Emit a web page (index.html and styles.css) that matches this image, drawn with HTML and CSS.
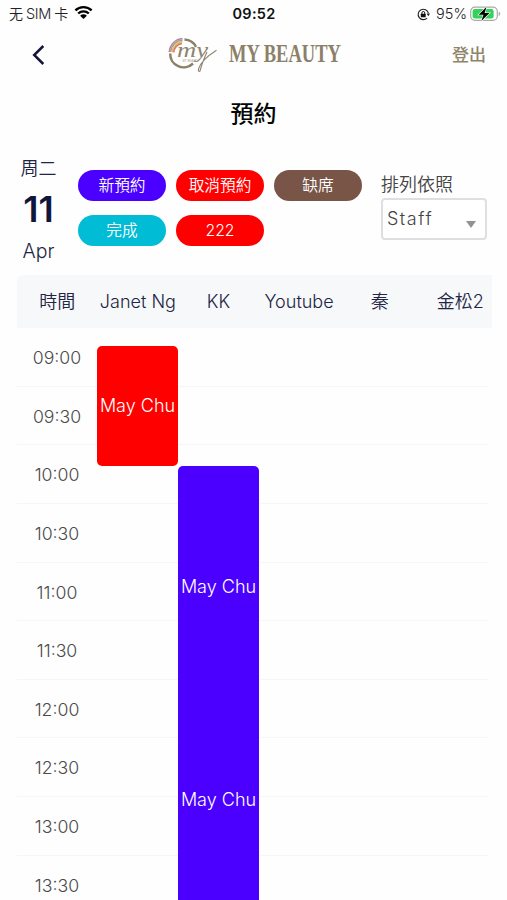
FILE: index.html
```html
<!doctype html>
<html lang="zh-Hant">

<head>
	<title>預約</title>
	<meta charset="utf-8">
	<meta name="viewport" content="width=device-width, initial-scale=1.0">
	<link rel="stylesheet" href="styles.css">
</head>

<body>
	<div class="status">
		<div class="carrier">
			<span>无<span class="sim">SIM</span>卡</span>
			<svg class="wifi" width="19" height="15" viewBox="0 0 19 15">
				<path d="M1.4 5.4a11.6 11.6 0 0 1 16.2 0M4.2 8.5a7.6 7.6 0 0 1 10.6 0" fill="none" stroke="#000" stroke-width="2.4"/>
				<path d="M6.1 10.7a4.9 4.9 0 0 1 6.8 0L9.5 14z"/>
			</svg>
		</div>
		<div class="clock">09:52</div>
		<div class="power">
			<svg class="lock" width="13" height="13" viewBox="0 0 13 13">
				<path d="M11.4 5.1A5.2 5.2 0 1 0 10.2 10" fill="none" stroke="#222" stroke-width="1.1"/>
				<path d="M9.6 5.6h3.4l-1.6 2.7z" fill="#222"/>
				<rect x="3.8" y="5.7" width="4.9" height="3.6" rx=".6" fill="#111"/>
				<path d="M4.9 6V4.9a1.4 1.4 0 0 1 2.8 0V6" fill="none" stroke="#111"/>
			</svg>
			<span class="percent">95%</span>
			<svg class="battery" width="31" height="16" viewBox="0 0 31 16">
				<rect x=".7" y="1.2" width="26.6" height="13.2" rx="4.2" fill="#fff" stroke="#a9a9a9" stroke-width="1.2"/>
				<rect x="2.6" y="3.1" width="21" height="9.4" rx="2.3" fill="#35d158"/>
				<path d="M28.7 5.8v4.1q1.6-.5 1.6-2t-1.6-2.1z" fill="#aaa"/>
				<path d="M16.6.8 8.7 8.7h4.8l-2.2 6.3 8.2-8h-4.9z" stroke="#fff" stroke-width="1.2" paint-order="stroke"/>
			</svg>
		</div>
	</div>

	<header class="topbar">
		<a class="back" href="#">
			<svg width="13" height="22" viewBox="0 0 13 22">
				<path d="M11.3 2 2.2 11l9.1 9" fill="none" stroke="#17133f" stroke-width="2.5"/>
			</svg>
		</a>
		<div class="logo">
			<svg width="52" height="40" viewBox="0 0 52 40">
				<g fill="none">
					<path d="M18.5 4.6A13.8 13.8 0 0 1 30 11.8" stroke="#8b8068" stroke-width="2.5"/>
					<path d="M4.2 18.5A13.4 13.4 0 0 0 27 28.5" stroke="#8b8068" stroke-width="2.5"/>
					<path d="M3.3 17A14.2 14.2 0 0 1 16.5 3.6" stroke="#b781bb" stroke-width="1.5"/>
					<path d="M4.7 17A12.8 12.8 0 0 1 16.5 5" stroke="#9fa678" stroke-width="1.5"/>
					<path d="M6.1 17.2A11.4 11.4 0 0 1 16.5 6.5" stroke="#d8c06f" stroke-width="1.5"/>
					<path d="M7.7 17.4A9.6 9.6 0 0 1 16 8.3" stroke="#e77960" stroke-width="1.8"/>
					<path d="M41 17Q36 28 34 36q-2 1.5-1.5-2Q35 25 50.5 15.2" stroke="#8f846e" stroke-width="1.1"/>
				</g>
				<text class="logo-script" x="11" y="21.5" textLength="31" lengthAdjust="spacingAndGlyphs">my</text>
				<text class="logo-small" x="16.5" y="26.5" textLength="16">MY BEAUTY</text>
			</svg>
			<span class="logo-name">MY BEAUTY</span>
		</div>
		<a class="logout" href="#">登出</a>
	</header>

	<h1>預約</h1>

	<section class="filters">
		<div class="date">
			<span>周二</span>
			<span class="day">11</span>
			<span class="month">Apr</span>
		</div>
		<div class="legend">
			<span class="pill new">新預約</span>
			<span class="pill cancelled">取消預約</span>
			<span class="pill absent">缺席</span>
			<span class="pill done">完成</span>
			<span class="pill cancelled">222</span>
		</div>
		<div class="sort">
			<span>排列依照</span>
			<div class="select">
				<span>Staff</span>
				<i class="caret"></i>
			</div>
		</div>
	</section>

	<main class="schedule">
		<div class="staff">
			<span>時間</span>
			<span>Janet Ng</span>
			<span>KK</span>
			<span>Youtube</span>
			<span>秦</span>
			<span>金松2</span>
		</div>
		<div class="board">
			<div class="times">
				<div class="slot"><span>09:00</span></div>
				<div class="slot"><span>09:30</span></div>
				<div class="slot"><span>10:00</span></div>
				<div class="slot"><span>10:30</span></div>
				<div class="slot"><span>11:00</span></div>
				<div class="slot"><span>11:30</span></div>
				<div class="slot"><span>12:00</span></div>
				<div class="slot"><span>12:30</span></div>
				<div class="slot"><span>13:00</span></div>
				<div class="slot"><span>13:30</span></div>
			</div>
			<div class="bookings">
				<div class="booking cancelled">May Chu</div>
				<div class="booking long new">
					<span>May Chu</span>
					<span>May Chu</span>
				</div>
			</div>
		</div>
	</main>
</body>

</html>
```
FILE: styles.css
```css
*
{
	box-sizing: border-box;
}
body
{
	margin: 0;
	height: 900px;
	overflow: hidden;
	background: #fefefe;
	color: #222443;
	font-family: Inter, "Noto Sans CJK TC", sans-serif;
	font-size: 18px;
	font-weight: 350;
}

a
{
	text-decoration: none;
}

svg
{
	display: block;
}

.status
{
	display: grid;
	grid-template-columns: 1fr auto 1fr;
	align-items: center;
	height: 28px;
	padding: 0 6px 0 9px;
	color: #222;
	font-size: 15px;
	line-height: 28px;
}

.carrier, .power
{
	display: flex;
	align-items: center;
}

.carrier
{
	gap: 6px;
	font-size: 14px;
}

.sim
{
	margin: 0 3px;
	font-size: 14.5px;
	letter-spacing: -0.3px;
}

.wifi
{
	margin-top: -3px;
}

.clock
{
	margin-left: -2px;
	color: #111;
	font-size: 14.5px;
	font-weight: 600;
	letter-spacing: 0.3px;
}

.power
{
	justify-content: flex-end;
}

.percent
{
	margin: 0 3px 0 6px;
	font-size: 14.5px;
	letter-spacing: 0;
}

.battery
{
	margin-top: -1px;
}

.topbar
{
	display: grid;
	grid-template-columns: 1fr 176px 1fr;
	align-items: center;
	height: 54px;
	padding: 0 21px 0 32px;
}

.logo
{
	display: flex;
	gap: 11px;
	margin-left: -5px;
}

.logo-script
{
	fill: #8f846e;
	font: italic 21px "Liberation Serif", serif;
}

.logo-small
{
	fill: #a79d8a;
	font: 2.6px "Liberation Sans", sans-serif;
}

.logo-name
{
	width: 110px;
	color: #8b8068;
	font: bold 25px/38px "Liberation Serif", serif;
	white-space: nowrap;
	transform: scaleX(0.74);
	transform-origin: left;
}

.logout
{
	justify-self: end;
	margin-top: -3px;
	color: #8f8468;
	font-size: 17px;
	font-weight: 500;
}

h1
{
	height: 64px;
	margin: 0;
	color: #050505;
	font-size: 23px;
	font-weight: 500;
	line-height: 64px;
	text-align: center;
}

.filters
{
	display: flex;
	height: 129px;
	padding: 9px 20px 0 16px;
}

.date
{
	display: flex;
	flex-direction: column;
	align-items: center;
	width: 45px;
	line-height: 28px;
}

.day
{
	color: #10153a;
	font-size: 36px;
	font-weight: 600;
	line-height: 52px;
}

.month
{
	font-size: 19.5px;
	line-height: 32px;
}

.legend
{
	display: grid;
	grid-template-columns: repeat(3, 88px);
	grid-auto-rows: 31px;
	gap: 14px 10px;
	margin: 15px 0 0 17px;
}

.pill
{
	border-radius: 16px;
	color: #fff;
	font-size: 15.7px;
	line-height: 31px;
	text-align: center;
}

.new
{
	background: #4b00ff;
}

.cancelled
{
	background: #ff0000;
}

.absent
{
	background: #795548;
}

.done
{
	background: #00bcd4;
}

.sort
{
	width: 106px;
	margin: 16px 0 0 19px;
	color: #444;
	line-height: 28px;
}

.select
{
	display: flex;
	justify-content: space-between;
	height: 42px;
	margin-top: -1px;
	padding: 0 9px 0 4px;
	border: 2px solid #dedfe3;
	border-radius: 4px;
	background: #fff;
	line-height: 37px;
	letter-spacing: 1.5px;
}

.caret
{
	align-self: center;
	margin-top: 10px;
	border: 5px solid transparent;
	border-top: 7px solid #929292;
	border-bottom: 0;
}

.schedule
{
	margin: 0 15px 0 17px;
}

.staff
{
	display: grid;
	grid-template-columns: repeat(6, 80.6px);
	width: 475px;
	height: 53px;
	border-radius: 6px 0 0 0;
	background: #f6f8fa;
	line-height: 53px;
	text-align: center;
	white-space: nowrap;
}

/* the time lines and the bookings share one grid cell */
.board
{
	display: grid;
}

.times, .bookings
{
	grid-area: 1 / 1;
}

.times
{
	width: 471px;
}

.slot
{
	height: 58.65px;
	border-bottom: 1px solid #f6f6f6;
	color: #4b4b4b;
	line-height: 60px;
}

.slot span
{
	display: block;
	width: 80px;
	font-size: 17.7px;
	text-align: center;
}

.bookings
{
	display: grid;
	grid-template-columns: 81px 81px;
	align-items: start;
	margin-left: 80px;
	padding-top: 18px;
}

.booking
{
	height: 120px;
	border-radius: 5px;
	color: #fff;
	line-height: 120px;
	text-align: center;
	white-space: nowrap;
}

.booking.long
{
	display: flex;
	flex-direction: column;
	height: 460px;
	margin-top: 120px;
	padding-top: 14px;
	line-height: 213px;
}
```
